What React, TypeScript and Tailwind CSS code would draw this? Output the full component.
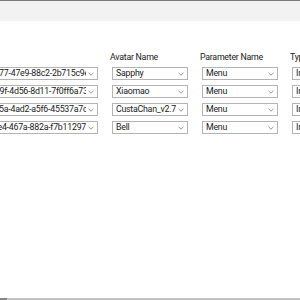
import React from "react";

const rows = [
  { id: "avtr_3c1d2e77-47e9-88c2-2b715c9e04a1", avatar: "Sapphy", param: "Menu", type: "Int" },
  { id: "avtr_8a0b719f-4d56-8d11-7f0ff6a73b2c", avatar: "Xiaomao", param: "Menu", type: "Int" },
  { id: "avtr_b2e4c05a-4ad2-a5f6-45537a7c91d0", avatar: "CustaChan_v2.7", param: "Menu", type: "Int" },
  { id: "avtr_91fd0ee4-467a-882a-f7b11297e3c5", avatar: "Bell", param: "Menu", type: "Int" },
];

function Chevron() {
  return (
    <svg width="6" height="4" viewBox="0 0 6 4" className="shrink-0">
      <polyline points="0.5,0.8 3,3.2 5.5,0.8" fill="none" stroke="#8a8a8a" strokeWidth="0.9" />
    </svg>
  );
}

function Combo({ value, width }: { value: string; width: string }) {
  return (
    <div className={`${width} h-[13px] flex items-center border border-[#b4b4b4] bg-white pl-[3px] pr-[3px] gap-[2px]`}>
      <span className="flex-1 overflow-hidden whitespace-nowrap leading-none">{value}</span>
      <Chevron />
    </div>
  );
}

function Column({ label, children }: { label: string; children: React.ReactNode }) {
  return (
    <div className="flex flex-col shrink-0">
      <div className="h-[16px] leading-[16px] -ml-[2px] whitespace-nowrap">{label}</div>
      <div className="mt-[2px] flex flex-col gap-[5px]">{children}</div>
    </div>
  );
}

export default function App() {
  return (
    <div className="w-[300px] h-[300px] bg-white flex flex-col overflow-hidden text-[#1a1a1a] text-[8.8px] tracking-[-0.25px] font-['Roboto',sans-serif]">
      <div className="h-px bg-[#7a7a7a]" />
      <div className="h-[20px] bg-[#f2f2f2]" />
      <div className="flex-1 overflow-hidden">
        <div className="flex gap-[14px] mt-[28px] -ml-[50px]">
          <Column label="Avatar ID">
            {rows.map((r) => (
              <Combo key={r.id} value={r.id} width="w-[148px]" />
            ))}
          </Column>
          <Column label="Avatar Name">
            {rows.map((r) => (
              <Combo key={r.avatar} value={r.avatar} width="w-[76px]" />
            ))}
          </Column>
          <Column label="Parameter Name">
            {rows.map((r, i) => (
              <Combo key={i} value={r.param} width="w-[76px]" />
            ))}
          </Column>
          <Column label="Type">
            {rows.map((r, i) => (
              <Combo key={i} value={r.type} width="w-[60px]" />
            ))}
          </Column>
        </div>
      </div>
      <div className="h-[2px] flex items-end">
        <div className="w-[7px] h-[2px] bg-[#858585]" />
        <div className="flex-1 h-[2px] bg-[#c2c2c2]" />
      </div>
    </div>
  );
}
